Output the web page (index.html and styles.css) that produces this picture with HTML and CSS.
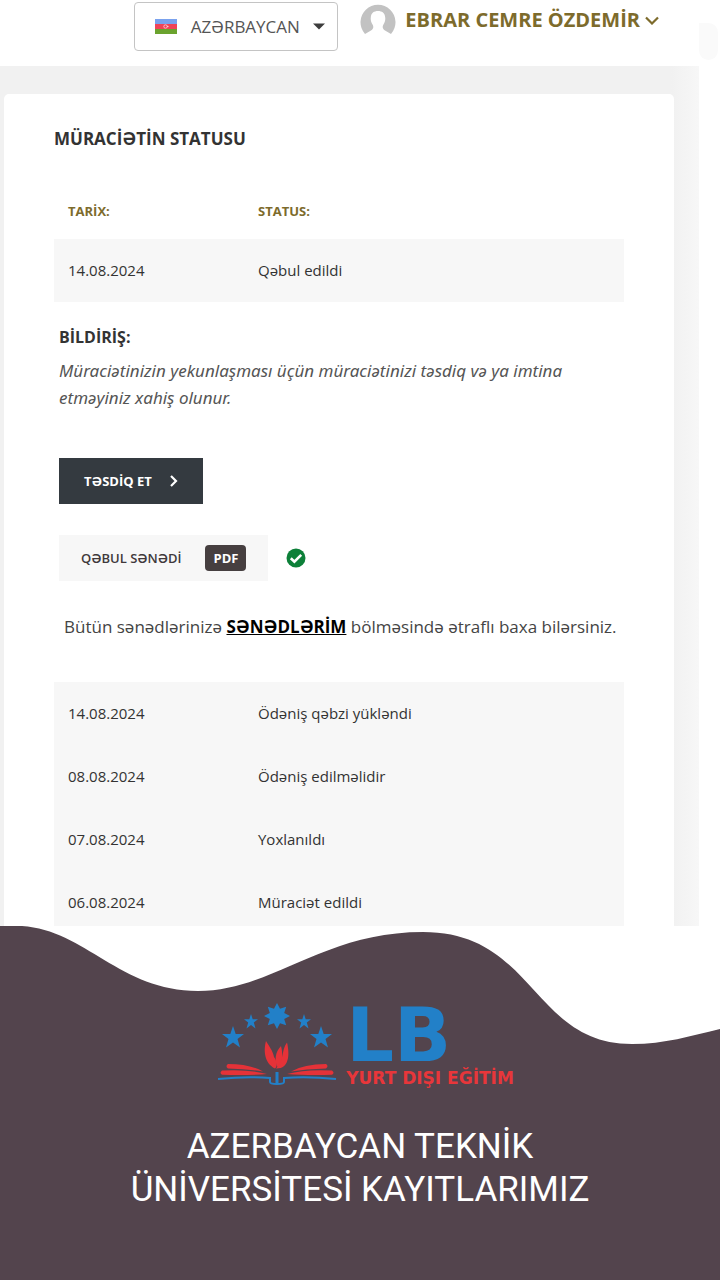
FILE: index.html
```html
<!DOCTYPE html>
<html lang="az">
<head>
<meta charset="utf-8">
<meta name="viewport" content="width=device-width, initial-scale=1">
<title>Müraciətin statusu</title>
<link rel="stylesheet" href="styles.css">
</head>
<body>
<div class="portal">
  <header class="topbar">
    <button class="language" type="button">
      <svg class="flag" viewBox="0 0 22 15" aria-hidden="true">
        <path fill="#7aa2ee" d="M0 0h22v5H0z"/><path fill="#ef4358" d="M0 5h22v5H0z"/><path fill="#6ba32e" d="M0 10h22v5H0z"/>
        <circle cx="10.500" cy="7.500" r="1.700" fill="none" stroke="#fbd5da" stroke-width=".8"/><circle cx="12.800" cy="7.500" r=".8" fill="#fbd5da"/>
      </svg>
      <span>AZƏRBAYCAN</span>
      <svg class="caret" viewBox="0 0 12 7" aria-hidden="true"><path fill="#3d3d3d" d="M0 .5h12L6 6.500z"/></svg>
    </button>
    <button class="account" type="button">
      <svg class="avatar" viewBox="0 0 36 32" aria-hidden="true">
        <path fill="#c2c2c2" d="M5 30A17.500 17.500 0 1 1 31 30L25 26.500C22.500 25 22.300 23 23.200 21C25 18.500 25.500 16 25.200 13.500C25 9 22 7 18 7S11 9 10.800 13.500C10.500 16 11 18.500 12.800 21C13.700 23 13.500 25 11 26.500Z"/>
      </svg>
      <span>EBRAR CEMRE ÖZDEMİR</span>
      <svg class="chevron" viewBox="0 0 14 9" aria-hidden="true"><path fill="none" stroke="#7d6b2c" stroke-width="2.200" d="M1 1.500l6 6 6-6"/></svg>
    </button>
  </header>
  <main class="card">
    <h1 class="title">MÜRACİƏTİN STATUSU</h1>
    <table class="records">
      <thead><tr><th>TARİX:</th><th>STATUS:</th></tr></thead>
      <tbody><tr><td>14.08.2024</td><td>Qəbul edildi</td></tr></tbody>
    </table>
    <section class="notice">
      <h2 class="notice-title">BİLDİRİŞ:</h2>
      <p class="notice-text">Müraciətinizin yekunlaşması üçün müraciətinizi təsdiq və ya imtina etməyiniz xahiş olunur.</p>
      <button class="confirm" type="button">TƏSDİQ ET
        <svg class="arrow" viewBox="0 0 8 12" aria-hidden="true"><path fill="none" stroke="#fff" stroke-width="2.200" d="M1 1l5 5-5 5"/></svg>
      </button>
      <div class="document-row">
        <a class="document" href="#pdf">QƏBUL SƏNƏDİ <span class="badge">PDF</span></a>
        <svg class="check" viewBox="0 0 20 20" role="img" aria-label="Təsdiqləndi"><circle cx="10" cy="10" r="9.500" fill="#0d8039"/><path fill="none" stroke="#fff" stroke-width="2.600" d="M4.800 10.200l3.600 3.500 6.800-6.900"/></svg>
      </div>
    </section>
    <p class="hint">Bütün sənədlərinizə <a class="hint-link" href="#documents">SƏNƏDLƏRİM</a> bölməsində ətraflı baxa bilərsiniz.</p>
    <table class="records">
      <tbody>
        <tr><td>14.08.2024</td><td>Ödəniş qəbzi yükləndi</td></tr>
        <tr><td>08.08.2024</td><td>Ödəniş edilməlidir</td></tr>
        <tr><td>07.08.2024</td><td>Yoxlanıldı</td></tr>
        <tr><td>06.08.2024</td><td>Müraciət edildi</td></tr>
      </tbody>
    </table>
  </main>
</div>
<footer class="banner">
  <svg class="wave" viewBox="0 0 720 120" preserveAspectRatio="none" aria-hidden="true"><path fill="#fff" d="M0 0H22C85 4 120 65 198 65C272 65 322 6 423 6C535 6 532 118 632 118C665 118 690 110 720 103V0Z"/></svg>
  <div class="brand">
    <svg class="emblem" viewBox="0 0 120 84" aria-hidden="true">
      <g fill="#2280c8">
        <path id="star" d="M15 23L17.700 31H26L19.500 36L22 44.500L15 39.500L8 44.500L10.500 36L4 31H12.300Z"/>
        <use href="#star" x="88"/>
        <path id="small" d="M33 11L34.700 16.200H40L35.800 19.500L37.500 25.500L33 22L28.500 25.500L30.200 19.500L26 16.200H31.300Z"/>
        <use href="#small" x="53"/>
        <path d="M59 0L62 5.800L68.200 3.800L66.200 10L72 13L66.200 16L68.200 22.200L62 20.200L59 26L56 20.200L49.800 22.200L51.800 16L46 13L51.800 10L49.800 3.800L56 5.800Z"/>
      </g>
      <g fill="#e53238">
        <path d="M48 38C45.500 47 46 60 57 65.500C60 63 59 58 56 54C55 48 51 43 48 38Z"/>
        <path d="M63 43C57 49 56 58 60 65C65 60 65 51 63 43Z"/>
        <path d="M69 39.500C63 47 67 56 58 65.500C71 66 72 52 69 39.500Z"/>
        <g id="pages">
          <path d="M10 61Q32 61 45 68.500Q30 66 10 65.500Q7 63 10 61Z"/>
          <path d="M4 67.500Q31 66 49 71Q30 72.500 4 71.800Q1 70 4 67.500Z"/>
        </g>
        <use href="#pages" transform="matrix(-1 0 0 1 118 0)"/>
      </g>
      <path fill="none" stroke="#2280c8" stroke-width="2" d="M0 76Q29 73 52 75V79Q52 81 59 81Q66 81 66 79V75Q89 73 118 76"/>
      <path fill="none" stroke="#2280c8" stroke-width="3" d="M59 69V80"/>
    </svg>
    <div class="brand-text">
      <span class="brand-name">LB</span>
      <span class="brand-tagline">YURT DIŞI EĞİTİM</span>
    </div>
  </div>
  <p class="headline">AZERBAYCAN TEKNİK<br>ÜNİVERSİTESİ KAYITLARIMIZ</p>
</footer>
</body>
</html>
```
FILE: styles.css
```css
* { box-sizing: border-box; }
body {
  margin: 0;
  min-height: 100vh;
  display: flex;
  flex-direction: column;
  background: #fff;
  color: #333;
  font-family: "Open Sans", "Noto Sans", sans-serif;
}
h1, h2, p { margin: 0; }
button { font: inherit; cursor: pointer; }
.portal {
  position: relative;
  margin-right: 21px;
  padding-right: 25px;
  background: linear-gradient(90deg, #f1f1f1 96%, #f7f7f7);
}
.portal::after {
  content: "";
  position: absolute;
  left: 100%;
  top: 23px;
  width: 19px;
  height: 37px;
  background: #fafafa;
  border-radius: 0 12px 12px 12px;
}
.topbar {
  display: flex;
  align-items: flex-start;
  justify-content: flex-end;
  gap: 22px;
  height: 66px;
  margin-right: -25px;
  padding: 2px 40px 0 0;
  background: #fff;
}
.language {
  display: flex;
  align-items: center;
  justify-content: space-between;
  width: 204px;
  height: 49px;
  padding: 0 12px 0 20px;
  border: 1px solid #c4c4c4;
  border-radius: 4px;
  background: #fff;
  color: #555;
  font-size: 17px;
}
.flag { width: 22px; height: 15px; }
.caret { width: 12px; height: 7px; }
.account {
  display: flex;
  align-items: center;
  padding: 0;
  border: 0;
  background: none;
  color: #7d6b2c;
  font-size: 20px;
  font-weight: 700;
  line-height: 36px;
}
.avatar { width: 36px; height: 32px; margin-right: 9px; }
.chevron { width: 14px; height: 9px; margin-left: 5px; }
.card {
  margin: 28px 0 0 4px;
  padding: 30px 50px 0;
  border-radius: 5px 5px 0 0;
  background: #fff;
}
.title { margin-bottom: 32px; font-size: 17px; line-height: 30px; }
.records {
  width: 100%;
  border-collapse: collapse;
  table-layout: fixed;
  font-size: 15px;
  line-height: 23px;
}
.records th, .records td { padding: 20px 14px; text-align: left; }
.records th { padding: 14px 14px 16px; color: #7d6b2c; font-size: 13px; }
.records tbody { background: #f7f7f7; }
.records th:first-child, .records td:first-child { width: 33.333%; }
.notice { padding: 22px 5px 0; }
.notice-title { font-size: 16px; line-height: 27px; margin-bottom: 6px; }
.notice-text { margin-bottom: 47px; color: #555; font-family: "Noto Sans", sans-serif; font-size: 17px; font-style: italic; line-height: 27px; }
.confirm {
  display: flex;
  align-items: center;
  gap: 18px;
  height: 46px;
  margin-bottom: 31px;
  padding: 0 25px;
  border: 0;
  background: #343a40;
  color: #fff;
  font-size: 13px;
  font-weight: 700;
}
.arrow { width: 8px; height: 12px; }
.document-row { display: flex; align-items: center; gap: 18px; }
.document {
  display: flex;
  align-items: center;
  gap: 24px;
  height: 46px;
  padding: 0 22px;
  background: #f7f7f7;
  color: #40393b;
  font-size: 13px;
  font-weight: 600;
  text-decoration: none;
}
.badge { padding: 0 8px; border-radius: 4px; background: #463f40; color: #fff; font-weight: 700; line-height: 26px; }
.check { width: 20px; height: 20px; }
.hint { margin: 31px 0 41px; padding-left: 10px; color: #444; font-size: 17px; line-height: 29px; white-space: nowrap; }
.hint-link { color: #000; font-weight: 700; }
.banner {
  position: relative;
  flex: 1;
  display: flex;
  flex-direction: column;
  align-items: center;
  margin-top: -8px;
  padding: 77px 20px 64px;
  background: #53444d;
  color: #fff;
}
.wave { position: absolute; left: 0; top: 0; width: 100%; height: 120px; }
.brand { position: relative; display: flex; gap: 8px; margin: 0 0 36px 12px; }
.emblem { width: 120px; height: 84px; }
.brand-text { display: flex; flex-direction: column; font-family: "DejaVu Sans", sans-serif; font-weight: 700; }
.brand-name { color: #2280c8; font-size: 75px; line-height: 64px; }
.brand-tagline { color: #e8363a; font-size: 17px; line-height: 22px; }
.headline { font-family: Roboto, sans-serif; font-size: 35px; line-height: 43px; text-align: center; }
```
